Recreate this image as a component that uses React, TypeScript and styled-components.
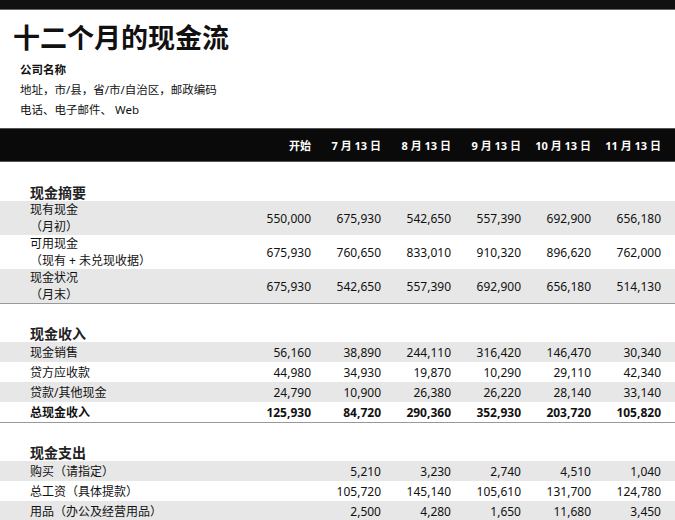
import React from "react";
import styled, { createGlobalStyle } from "styled-components";

const Global = createGlobalStyle`
  body { margin: 0; background: #fff; font-family: "Noto Sans", "Noto Sans CJK SC", sans-serif; color: #111; }
`;
const TopBar = styled.div`height: 9px; background: #111; border-bottom: 1px solid #666;`;
const Head = styled.div`padding: 10px 0 0 13px; height: 118px; box-sizing: border-box;`;
const Title = styled.h1`margin: 0; font-size: 27px; line-height: 34px; font-weight: 700; font-family: "Noto Sans CJK SC", sans-serif;`;
const Info = styled.div<{ $bold?: boolean }>`
  padding-left: 7px; font-size: 11.5px; line-height: 20px; font-weight: ${p => (p.$bold ? 700 : 400)};
  font-family: "Noto Sans", "Noto Sans CJK SC", sans-serif; margin-top: ${p => (p.$bold ? "6px" : "0")};
`;
const Grid = styled.div<{ $h?: number; $bg?: string; $bold?: boolean; $line?: boolean }>`
  display: grid; grid-template-columns: 1fr repeat(6, 70px); padding: 0 14px 0 30px;
  align-items: center; height: ${p => p.$h ?? 20}px; background: ${p => p.$bg ?? "transparent"};
  font-size: 12px; font-weight: ${p => (p.$bold ? 700 : 400)};
  border-bottom: ${p => (p.$line ? "1px solid #999" : "none")};
`;
const HeaderBar = styled(Grid)`
  background: #0a0a0a; color: #fff; font-weight: 700; font-size: 11px;
  border-top: 1px solid #555; border-bottom: 1px solid #555; height: 34px; box-sizing: border-box;
`;
const Num = styled.div`text-align: right;`;
const Label = styled.div`line-height: 17px; white-space: nowrap;`;
const SectionTitle = styled.div<{ $mt: number }>`
  padding: 0 0 0 30px; height: 18px; margin-top: ${p => p.$mt}px; font-size: 14px; font-weight: 700;
  font-family: "Noto Sans CJK SC", sans-serif; line-height: 18px; color: #222;
`;

type Row = { l: string[]; v: string[]; bold?: boolean };
const Section = ({ title, rows, h, mt }: { title: string; rows: Row[]; h: number; mt: number }) => (
  <>
    <SectionTitle $mt={mt}>{title}</SectionTitle>
    {rows.map((r, i) => (
      <Grid key={i} $h={h} $bg={i % 2 === 0 ? "#e7e7e7" : "#fff"} $bold={r.bold} $line={i === rows.length - 1}>
        <Label>{r.l.map((x, j) => <div key={j}>{x}</div>)}</Label>
        {r.v.map((x, j) => <Num key={j}>{x}</Num>)}
      </Grid>
    ))}
  </>
);

export default function App() {
  return (
    <>
      <Global />
      <TopBar />
      <Head>
        <Title>十二个月的现金流</Title>
        <Info $bold>公司名称</Info>
        <Info>地址，市/县，省/市/自治区，邮政编码</Info>
        <Info>电话、电子邮件、 Web</Info>
      </Head>
      <HeaderBar>
        <div />
        {["开始", "7 月 13 日", "8 月 13 日", "9 月 13 日", "10 月 13 日", "11 月 13 日"].map(h => <Num key={h}>{h}</Num>)}
      </HeaderBar>
      <Section mt={21} title="现金摘要" h={34} rows={[
        { l: ["现有现金", "（月初）"], v: ["550,000", "675,930", "542,650", "557,390", "692,900", "656,180"] },
        { l: ["可用现金", "（现有 + 未兑现收据）"], v: ["675,930", "760,650", "833,010", "910,320", "896,620", "762,000"] },
        { l: ["现金状况", "（月末）"], v: ["675,930", "542,650", "557,390", "692,900", "656,180", "514,130"] },
      ]} />
      <Section mt={20} title="现金收入" h={20} rows={[
        { l: ["现金销售"], v: ["56,160", "38,890", "244,110", "316,420", "146,470", "30,340"] },
        { l: ["贷方应收款"], v: ["44,980", "34,930", "19,870", "10,290", "29,110", "42,340"] },
        { l: ["贷款/其他现金"], v: ["24,790", "10,900", "26,380", "26,220", "28,140", "33,140"] },
        { l: ["总现金收入"], v: ["125,930", "84,720", "290,360", "352,930", "203,720", "105,820"], bold: true },
      ]} />
      <Section mt={20} title="现金支出" h={20} rows={[
        { l: ["购买（请指定）"], v: ["", "5,210", "3,230", "2,740", "4,510", "1,040"] },
        { l: ["总工资（具体提款）"], v: ["", "105,720", "145,140", "105,610", "131,700", "124,780"] },
        { l: ["用品（办公及经营用品）"], v: ["", "2,500", "4,280", "1,650", "11,680", "3,450"] },
      ]} />
    </>
  );
}
